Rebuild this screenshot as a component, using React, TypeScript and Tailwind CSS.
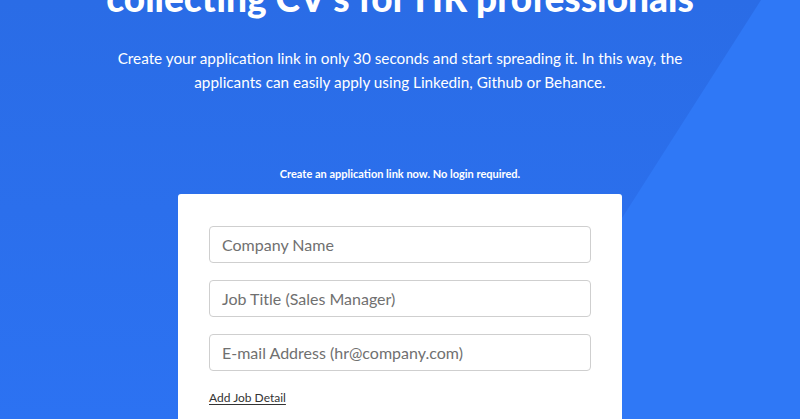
import React from 'react';

const fields = ['Company Name', 'Job Title (Sales Manager)', 'E-mail Address (hr@company.com)'];

export default function App() {
  return (
    <div
      className="relative w-[800px] h-[419px] overflow-hidden bg-[#2f78f6] text-white"
      style={{ fontFamily: 'Lato, "Open Sans", sans-serif' }}
    >
      {/* diagonal shade behind the hero */}
      <svg className="absolute inset-0 pointer-events-none" width="800" height="419" viewBox="0 0 800 419">
        <defs>
          <linearGradient id="shade" x1="0" y1="0" x2="0" y2="1">
            <stop offset="0" stopColor="#2a6ce6" />
            <stop offset="1" stopColor="#2c72f2" />
          </linearGradient>
        </defs>
        <polygon points="0,0 761,0 494,419 0,419" fill="url(#shade)" />
      </svg>

      <div className="relative flex flex-col items-center">
        <h1 className="mt-[-24px] text-[37px] leading-[44px] font-black whitespace-nowrap">
          collecting CV's for HR professionals
        </h1>
        <p className="mt-[26px] w-[590px] text-center text-[15.3px] leading-[24px]">
          Create your application link in only 30 seconds and start spreading it. In this way, the applicants can
          easily apply using Linkedin, Github or Behance.
        </p>
        <div className="mt-[73px] text-[11px] leading-[14px] font-bold">
          Create an application link now. No login required.
        </div>
        <div className="mt-[13px] w-[444px] rounded-[3px] bg-white pt-[32px] px-[31px] pb-8">
          <div className="flex flex-col gap-[17px]">
            {fields.map((f) => (
              <div
                key={f}
                className="h-[37px] flex items-center rounded-[4px] border border-[#cfcfcf] px-[12px] text-[16px] text-[#707070]"
              >
                {f}
              </div>
            ))}
          </div>
          <div className="mt-[19px] text-[12px] leading-[16px] text-[#333] underline underline-offset-2">
            Add Job Detail
          </div>
        </div>
      </div>
    </div>
  );
}
